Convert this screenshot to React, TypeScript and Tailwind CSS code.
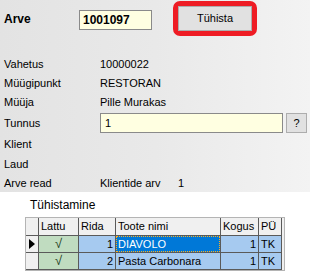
import React from 'react';

const font = { fontFamily: '"Liberation Sans", Arial, sans-serif' };

// Label row in the top panel
function Row({
  label,
  h,
  children,
}: {
  label: string;
  h: string;
  children?: React.ReactNode;
}) {
  return (
    <div className={`flex items-center ${h}`}>
      <div className="w-[96px] shrink-0">{label}</div>
      <div className="flex items-center flex-1">{children}</div>
    </div>
  );
}

const cell = 'border-r border-b border-[#5a5a5a] h-full flex items-center px-[2px]';

export default function App() {
  const rows = [
    { rida: 1, nimi: 'DIAVOLO', kogus: 1, pu: 'TK', active: true },
    { rida: 2, nimi: 'Pasta Carbonara', kogus: 1, pu: 'TK', active: false },
  ];

  return (
    <div className="w-[310px] h-[275px] bg-white text-[11px] text-black overflow-hidden" style={font}>
      {/* Top panel */}
      <div className="h-[192px] pl-[4px] bg-gradient-to-r from-[#e3e3e3] via-[#e9e9e9] to-[#f3f3f3]">
        {/* Arve header */}
        <div className="flex items-center h-[37px]">
          <div className="w-[75px] text-[12px] font-bold">Arve</div>
          <div className="w-[73px] h-[20px] mt-[2px] bg-[#ffffe1] border border-[#8a8a8a] flex items-center px-[3px] text-[12px] font-bold">
            1001097
          </div>
          <div className="ml-[21px] w-[84px] h-[35px] border-[5px] border-[#ee1c24] rounded-[7px] flex">
            <button className="flex-1 bg-[#e1e1e1] border border-[#adadad] flex items-center justify-center text-[11px]">
              Tühista
            </button>
          </div>
        </div>

        <div className="h-[17px]" />

        <Row label="Vahetus" h="h-[20px]">10000022</Row>
        <Row label="Müügipunkt" h="h-[19px]">RESTORAN</Row>
        <Row label="Müüja" h="h-[19px]">Pille Murakas</Row>
        <Row label="Tunnus" h="h-[22px]">
          <div className="w-[183px] h-[20px] bg-[#ffffe1] border border-[#8a8a8a] flex items-center px-[4px]">1</div>
          <div className="ml-[3px] w-[21px] h-[20px] bg-[#e1e1e1] border border-[#adadad] flex items-center justify-center">?</div>
        </Row>
        <Row label="Klient" h="h-[21px]" />
        <Row label="Laud" h="h-[19px]" />
        <Row label="Arve read" h="h-[18px]">
          <span className="w-[78px]">Klientide arv</span>
          <span>1</span>
        </Row>
      </div>

      {/* Tühistamine grid */}
      <div className="pl-[30px] pt-[4px] h-[22px] text-[12px]">Tühistamine</div>
      <div className="ml-[25px] mt-[3px] w-[260px] border border-[#b4b4b4] bg-[#f0f0f0]">
        <div className="grid grid-cols-[13px_40px_37px_105px_38px_23px] grid-rows-[18px_17px_17px]">
          <div className={`${cell} bg-[#f0f0f0]`} />
          <div className={`${cell} bg-[#f0f0f0]`}>Lattu</div>
          <div className={`${cell} bg-[#f0f0f0]`}>Rida</div>
          <div className={`${cell} bg-[#f0f0f0]`}>Toote nimi</div>
          <div className={`${cell} bg-[#f0f0f0]`}>Kogus</div>
          <div className={`${cell} bg-[#f0f0f0]`}>PÜ</div>

          {rows.map((r) => (
            <React.Fragment key={r.rida}>
              <div className={`${cell} bg-[#f0f0f0] justify-center !px-0`}>
                {r.active && (
                  <svg width="6" height="10" viewBox="0 0 6 10">
                    <path d="M0 0 L6 5 L0 10 Z" fill="#000" />
                  </svg>
                )}
              </div>
              <div className={`${cell} bg-[#c0dcc0] justify-center text-[13px] text-[#1a3a1a]`}>√</div>
              <div className={`${cell} bg-[#a6caf0] justify-end`}>{r.rida}</div>
              {r.active ? (
                <div className="border-r border-b border-[#5a5a5a] h-full p-0 bg-[#0078d7]">
                  <div className="h-full w-full border border-dotted border-[#ffb020] flex items-center px-[1px] text-white">
                    {r.nimi}
                  </div>
                </div>
              ) : (
                <div className={`${cell} bg-[#a6caf0]`}>{r.nimi}</div>
              )}
              <div className={`${cell} bg-[#a6caf0] justify-end`}>{r.kogus}</div>
              <div className={`${cell} bg-[#a6caf0]`}>{r.pu}</div>
            </React.Fragment>
          ))}
        </div>
      </div>
    </div>
  );
}
